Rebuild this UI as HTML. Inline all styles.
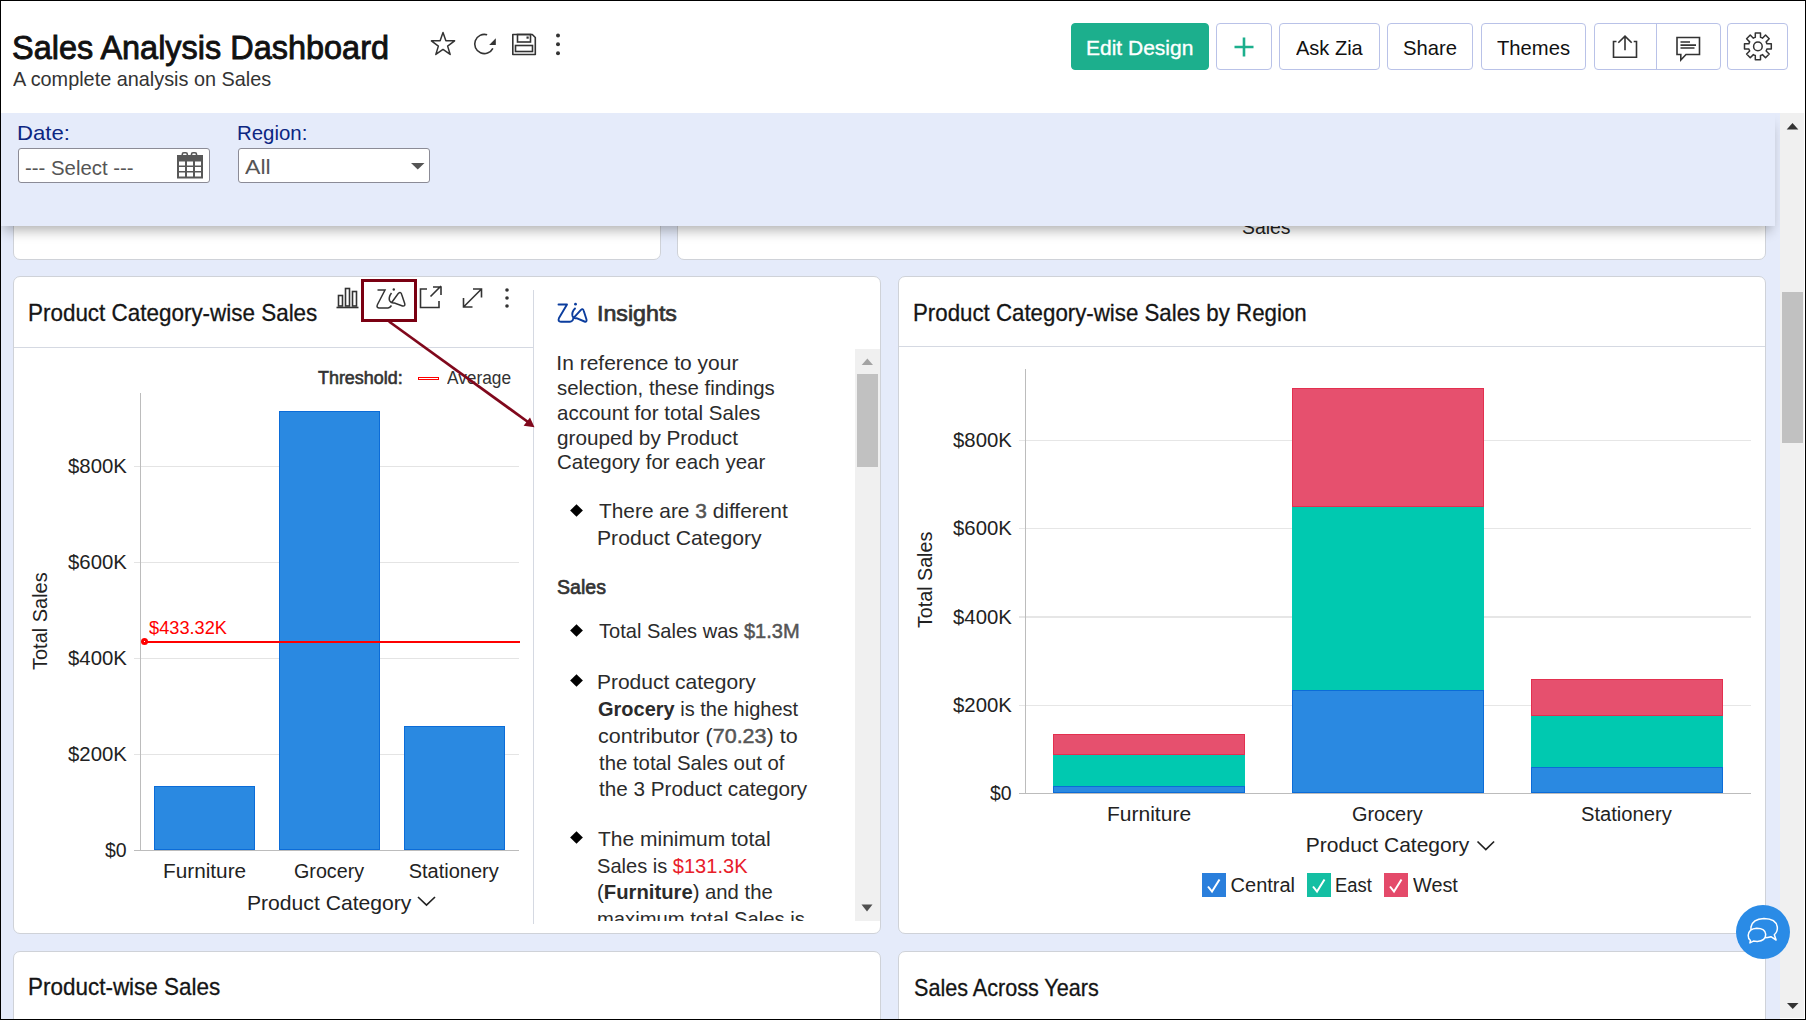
<!DOCTYPE html>
<html><head><meta charset="utf-8"><title>Sales Analysis Dashboard</title>
<style>
*{box-sizing:border-box;margin:0;padding:0}
html,body{width:1806px;height:1020px;overflow:hidden;background:#fff}
body{position:relative;font-family:"Liberation Sans",sans-serif;color:#222}
.a{position:absolute}
.t{position:absolute;white-space:pre;line-height:1;transform-origin:0 0}
b{font-weight:bold}
.card{position:absolute;background:#fff;border:1px solid #cfd2d8;border-radius:7px}
</style></head>
<body>
<div class="a" style="left:0px;top:113px;width:1780px;height:907px;background:#e5ebfa;"></div>
<div class="card" style="left:13px;top:150px;width:648px;height:110px"></div>
<div class="card" style="left:677px;top:150px;width:1089px;height:110px"></div>
<div class="t" style="left:1241.53px;top:217.00px;font-size:20px;font-weight:normal;color:#222;transform:scaleX(0.9688);">Sales</div>
<div class="card" style="left:13px;top:276px;width:868px;height:658px"></div>
<div class="a" style="left:14px;top:347px;width:519px;height:1px;background:#d5d9e2;"></div>
<div class="a" style="left:533px;top:290px;width:1px;height:634px;background:#d5d9e2;"></div>
<div class="t" style="left:28.43px;top:301.20px;font-size:24px;font-weight:normal;color:#151515;transform:scaleX(0.9349);-webkit-text-stroke:0.3px #151515;">Product Category-wise Sales</div>
<svg class="a" style="left:330px;top:276px" width="200" height="50" viewBox="330 276 200 50" fill="none" stroke="#333" stroke-width="1.6">
<path d="M336.5 307.5h22" />
<rect x="338.5" y="295.5" width="4" height="10.5" />
<rect x="345.5" y="288.5" width="4" height="17.5" />
<rect x="352.5" y="291.5" width="4" height="14.5" />
<path d="M377.5 290h7.5l-7.5 14.5q-1.5 3 1.5 3.5h9q2-.2 3.5-2.5" stroke-width="1.5"/>
<path d="M391.5 293q-3 4-2 7.5 1.5 3 5 2.5l8 3q3 .5 2.2-2.5l-3-9q-.8-3.2-3.5-1l-6.5 9" stroke-width="1.5"/>
<circle cx="393.8" cy="289.5" r="1.2" fill="#333" stroke="none"/>
<path d="M427 289h-6.5v18.5h18.5v-6.5" />
<path d="M430.5 296.5l10.5-10.5M433 287h8v8" />
<path d="M463.5 307l18-18M473 289h8.5v8.5M463.5 298v9h9" />
<circle cx="507" cy="290" r="1.8" fill="#333" stroke="none"/>
<circle cx="507" cy="298" r="1.8" fill="#333" stroke="none"/>
<circle cx="507" cy="306" r="1.8" fill="#333" stroke="none"/>
</svg>
<div class="a" style="left:134px;top:466px;width:385px;height:1px;background:#e4e4e4;"></div>
<div class="a" style="left:134px;top:562px;width:385px;height:1px;background:#e4e4e4;"></div>
<div class="a" style="left:134px;top:658px;width:385px;height:1px;background:#e4e4e4;"></div>
<div class="a" style="left:134px;top:754px;width:385px;height:1px;background:#e4e4e4;"></div>
<div class="a" style="left:134px;top:850px;width:385px;height:1px;background:#bcbcbc;"></div>
<div class="a" style="left:140px;top:393px;width:1px;height:458px;background:#bcbcbc;"></div>
<div class="t" style="left:67.90px;top:456.30px;font-size:20px;font-weight:normal;color:#222;transform:scaleX(1.0175);">$800K</div>
<div class="t" style="left:67.90px;top:552.30px;font-size:20px;font-weight:normal;color:#222;transform:scaleX(1.0175);">$600K</div>
<div class="t" style="left:67.90px;top:648.30px;font-size:20px;font-weight:normal;color:#222;transform:scaleX(1.0175);">$400K</div>
<div class="t" style="left:67.90px;top:744.30px;font-size:20px;font-weight:normal;color:#222;transform:scaleX(1.0175);">$200K</div>
<div class="t" style="left:104.50px;top:840.30px;font-size:20px;font-weight:normal;color:#222;transform:scaleX(0.9727);">$0</div>
<div class="a" style="left:154px;top:786px;width:101px;height:64px;background:#2a89e1;box-shadow:inset 0 0 0 1px #0b6cd8"></div>
<div class="a" style="left:279px;top:411px;width:101px;height:439px;background:#2a89e1;box-shadow:inset 0 0 0 1px #0b6cd8"></div>
<div class="a" style="left:404px;top:726px;width:101px;height:124px;background:#2a89e1;box-shadow:inset 0 0 0 1px #0b6cd8"></div>
<div class="a" style="left:144px;top:641px;width:376px;height:2px;background:#ff0000;"></div>
<div class="a" style="left:140.8px;top:638.3px;width:7px;height:7px;border-radius:50%;background:#ff0000"></div>
<div class="a" style="left:143.6px;top:641.1px;width:1.4px;height:1.4px;background:#fff"></div>
<div class="t" style="left:148.60px;top:618.90px;font-size:18px;font-weight:normal;color:#ff0000;transform:scaleX(1.0117);">$433.32K</div>
<div class="t" style="left:318.40px;top:369.00px;font-size:18px;font-weight:normal;color:#333;transform:scaleX(0.9952);-webkit-text-stroke:0.6px #333;">Threshold:</div>
<div class="a" style="left:418px;top:376.5px;width:21px;height:3.5px;border:1px solid #ff0000"></div>
<div class="t" style="left:446.60px;top:369.00px;font-size:18px;font-weight:normal;color:#333;transform:scaleX(0.9606);">Average</div>
<div class="t" style="left:162.92px;top:860.50px;font-size:20px;font-weight:normal;color:#222;transform:scaleX(1.0390);">Furniture</div>
<div class="t" style="left:294.41px;top:860.50px;font-size:20px;font-weight:normal;color:#222;transform:scaleX(0.9857);">Grocery</div>
<div class="t" style="left:408.70px;top:860.50px;font-size:20px;font-weight:normal;color:#222;">Stationery</div>
<div class="t" style="left:246.79px;top:891.70px;font-size:21px;font-weight:normal;color:#222;transform:scaleX(1.0056);">Product Category</div>
<svg class="a" style="left:416px;top:893px" width="22" height="16"><path d="M2 4l8.5 8 8.5-8" fill="none" stroke="#222" stroke-width="1.7"/></svg>
<div class="t" style="left:29.00px;top:670.00px;font-size:21px;font-weight:normal;color:#222;transform:rotate(-90deg) scaleX(0.9510);">Total Sales</div>
<svg class="a" style="left:554px;top:299px" width="36" height="28" viewBox="554 299 36 28" fill="none" stroke="#0b3d9e" stroke-width="1.9" stroke-linejoin="round" stroke-linecap="round">
<path d="M558.5 304.5h8.5l-8 13.5q-1.5 3.5 2 3.8h9q1.8 0 3-2"/>
<path d="M575 308.5q-3.5 3.5-2.5 7.5 1 3 4 2.2l8 3.3q2.5.8 2-2l-2.8-8.8q-.8-2.8-3-.5l-7.5 8.2"/>
<circle cx="575.5" cy="304.2" r="1.4" fill="#0b3d9e" stroke="none"/>
</svg>
<div class="t" style="left:596.89px;top:303.00px;font-size:22px;font-weight:normal;color:#333;transform:scaleX(1.0548);-webkit-text-stroke:0.7px #333;">Insights</div>
<div class="t" style="left:556.30px;top:351.90px;font-size:21px;font-weight:normal;color:#2b2b2b;">In reference to your</div>
<div class="t" style="left:557.33px;top:376.60px;font-size:21px;font-weight:normal;color:#2b2b2b;transform:scaleX(0.9717);">selection, these findings</div>
<div class="t" style="left:557.32px;top:401.70px;font-size:21px;font-weight:normal;color:#2b2b2b;transform:scaleX(0.9777);">account for total Sales</div>
<div class="t" style="left:557.31px;top:426.70px;font-size:21px;font-weight:normal;color:#2b2b2b;transform:scaleX(0.9874);">grouped by Product</div>
<div class="t" style="left:557.32px;top:451.30px;font-size:21px;font-weight:normal;color:#2b2b2b;transform:scaleX(0.9750);">Category for each year</div>
<div class="a" style="left:572.0px;top:505.5px;width:9px;height:9px;background:#000;transform:rotate(45deg)"></div>
<div class="t" style="left:598.70px;top:500.00px;font-size:21px;font-weight:normal;color:#2b2b2b;transform:scaleX(0.9937);">There are <span style="color:#555;-webkit-text-stroke:0.5px #555">3</span> different</div>
<div class="t" style="left:596.69px;top:526.50px;font-size:21px;font-weight:normal;color:#2b2b2b;transform:scaleX(1.0068);">Product Category</div>
<div class="t" style="left:556.57px;top:575.70px;font-size:21px;font-weight:normal;color:#333;transform:scaleX(0.9314);-webkit-text-stroke:0.7px #333;">Sales</div>
<div class="a" style="left:572.0px;top:626.0px;width:9px;height:9px;background:#000;transform:rotate(45deg)"></div>
<div class="t" style="left:598.70px;top:620.30px;font-size:21px;font-weight:normal;color:#2b2b2b;transform:scaleX(0.9550);">Total Sales was <span style="color:#555;-webkit-text-stroke:0.5px #555">$1.3M</span></div>
<div class="a" style="left:572.0px;top:676.0px;width:9px;height:9px;background:#000;transform:rotate(45deg)"></div>
<div class="t" style="left:596.90px;top:670.60px;font-size:21px;font-weight:normal;color:#2b2b2b;">Product category</div>
<div class="t" style="left:597.95px;top:697.50px;font-size:21px;font-weight:normal;color:#2b2b2b;transform:scaleX(0.9522);"><b>Grocery</b> is the highest</div>
<div class="t" style="left:597.88px;top:724.50px;font-size:21px;font-weight:normal;color:#2b2b2b;transform:scaleX(1.0238);">contributor (<span style="color:#555;-webkit-text-stroke:0.5px #555">70.23</span>) to</div>
<div class="t" style="left:598.90px;top:751.60px;font-size:21px;font-weight:normal;color:#2b2b2b;transform:scaleX(0.9688);">the total Sales out of</div>
<div class="t" style="left:598.90px;top:778.00px;font-size:21px;font-weight:normal;color:#2b2b2b;transform:scaleX(0.9853);">the 3 Product category</div>
<div class="a" style="left:572.0px;top:833.0px;width:9px;height:9px;background:#000;transform:rotate(45deg)"></div>
<div class="t" style="left:598.00px;top:828.00px;font-size:21px;font-weight:normal;color:#2b2b2b;">The minimum total</div>
<div class="t" style="left:597.04px;top:854.60px;font-size:21px;font-weight:normal;color:#2b2b2b;transform:scaleX(0.9551);">Sales is <span style="color:#e8202a">$131.3K</span></div>
<div class="t" style="left:597.03px;top:881.00px;font-size:21px;font-weight:normal;color:#2b2b2b;transform:scaleX(0.9650);">(<b>Furniture</b>) and the</div>
<div class="a" style="left:0;top:0;width:1806px;height:920.5px;overflow:hidden">
<div class="t" style="left:597.04px;top:908.00px;font-size:21px;font-weight:normal;color:#2b2b2b;transform:scaleX(0.9626);">maximum total Sales is</div>
</div>
<div class="a" style="left:855px;top:349px;width:25px;height:572px;background:#f0f0f0;"></div>
<div class="a" style="left:857px;top:373.5px;width:21px;height:93.5px;background:#c1c1c1;"></div>
<svg class="a" style="left:855px;top:349px" width="25" height="572"><path d="M6.7 16L12.35 9.5L18 16z" fill="#a3a3a3"/><path d="M6.5 555.5h11l-5.5 7z" fill="#505050"/></svg>
<div class="a" style="left:361px;top:279px;width:56px;height:43px;border:3px solid #7a0012"></div>
<svg class="a" style="left:380px;top:315px" width="165" height="120" viewBox="380 315 165 120">
<path d="M389 321.5L528 422" stroke="#80081c" stroke-width="2.7" fill="none"/>
<path d="M534.5 427.2L523.6 425.8L530 417.6z" fill="#80081c"/>
</svg>
<div class="card" style="left:898px;top:276px;width:868px;height:658px"></div>
<div class="a" style="left:899px;top:346px;width:866px;height:1px;background:#d5d9e2;"></div>
<div class="t" style="left:913.14px;top:301.20px;font-size:24px;font-weight:normal;color:#151515;transform:scaleX(0.9280);-webkit-text-stroke:0.3px #151515;">Product Category-wise Sales by Region</div>
<div class="a" style="left:1019px;top:439.5px;width:732px;height:1.5px;background:#e6e6e6;"></div>
<div class="a" style="left:1019px;top:527.5px;width:732px;height:1.5px;background:#e6e6e6;"></div>
<div class="a" style="left:1019px;top:616px;width:732px;height:1.5px;background:#e6e6e6;"></div>
<div class="a" style="left:1019px;top:704.5px;width:732px;height:1.5px;background:#e6e6e6;"></div>
<div class="a" style="left:1019px;top:793px;width:732px;height:1px;background:#bcbcbc;"></div>
<div class="a" style="left:1025px;top:369px;width:1px;height:425px;background:#bcbcbc;"></div>
<div class="t" style="left:953.00px;top:430.30px;font-size:20px;font-weight:normal;color:#222;transform:scaleX(1.0175);">$800K</div>
<div class="t" style="left:953.00px;top:518.30px;font-size:20px;font-weight:normal;color:#222;transform:scaleX(1.0175);">$600K</div>
<div class="t" style="left:953.00px;top:606.80px;font-size:20px;font-weight:normal;color:#222;transform:scaleX(1.0175);">$400K</div>
<div class="t" style="left:953.00px;top:695.30px;font-size:20px;font-weight:normal;color:#222;transform:scaleX(1.0175);">$200K</div>
<div class="t" style="left:989.60px;top:783.30px;font-size:20px;font-weight:normal;color:#222;transform:scaleX(0.9727);">$0</div>
<div class="a" style="left:1053px;top:734px;width:192px;height:21px;background:#e6506e;box-shadow:inset 0 0 0 1px #e3304f"></div>
<div class="a" style="left:1053px;top:755px;width:192px;height:31px;background:#00c9b0;"></div>
<div class="a" style="left:1053px;top:786px;width:192px;height:7px;background:#2a89e1;box-shadow:inset 0 0 0 1px #0b6cd8"></div>
<div class="a" style="left:1292px;top:388px;width:192px;height:119px;background:#e6506e;box-shadow:inset 0 0 0 1px #e3304f"></div>
<div class="a" style="left:1292px;top:507px;width:192px;height:183px;background:#00c9b0;"></div>
<div class="a" style="left:1292px;top:690px;width:192px;height:103px;background:#2a89e1;box-shadow:inset 0 0 0 1px #0b6cd8"></div>
<div class="a" style="left:1531px;top:679px;width:192px;height:37px;background:#e6506e;box-shadow:inset 0 0 0 1px #e3304f"></div>
<div class="a" style="left:1531px;top:716px;width:192px;height:51px;background:#00c9b0;"></div>
<div class="a" style="left:1531px;top:767px;width:192px;height:26px;background:#2a89e1;box-shadow:inset 0 0 0 1px #0b6cd8"></div>
<div class="t" style="left:1106.50px;top:804.20px;font-size:20px;font-weight:normal;color:#222;transform:scaleX(1.0506);">Furniture</div>
<div class="t" style="left:1352.41px;top:804.20px;font-size:20px;font-weight:normal;color:#222;transform:scaleX(0.9943);">Grocery</div>
<div class="t" style="left:1580.99px;top:804.20px;font-size:20px;font-weight:normal;color:#222;transform:scaleX(1.0079);">Stationery</div>
<div class="t" style="left:1305.80px;top:834.00px;font-size:21px;font-weight:normal;color:#222;">Product Category</div>
<svg class="a" style="left:1475px;top:836px" width="22" height="16"><path d="M2.5 5.5l8.3 8 8.3-8" fill="none" stroke="#222" stroke-width="1.7"/></svg>
<div class="t" style="left:914.30px;top:628.40px;font-size:21px;font-weight:normal;color:#222;transform:rotate(-90deg) scaleX(0.9373);">Total Sales</div>
<div class="a" style="left:1202px;top:873px;width:24px;height:24px;background:#2a7fdc"></div><svg class="a" style="left:1202px;top:873px" width="24" height="24"><path d="M6 13.5l4 5 7.5-12" fill="none" stroke="#fff" stroke-width="2"/></svg>
<div class="t" style="left:1230.60px;top:874.60px;font-size:20px;font-weight:normal;color:#222;">Central</div>
<div class="a" style="left:1307px;top:873px;width:24px;height:24px;background:#14bfa3"></div><svg class="a" style="left:1307px;top:873px" width="24" height="24"><path d="M6 13.5l4 5 7.5-12" fill="none" stroke="#fff" stroke-width="2"/></svg>
<div class="t" style="left:1334.86px;top:874.60px;font-size:20px;font-weight:normal;color:#222;transform:scaleX(0.9184);">East</div>
<div class="a" style="left:1384px;top:873px;width:24px;height:24px;background:#e44a6a"></div><svg class="a" style="left:1384px;top:873px" width="24" height="24"><path d="M6 13.5l4 5 7.5-12" fill="none" stroke="#fff" stroke-width="2"/></svg>
<div class="t" style="left:1413.20px;top:874.60px;font-size:20px;font-weight:normal;color:#222;transform:scaleX(0.9933);">West</div>
<div class="card" style="left:13px;top:951px;width:868px;height:200px"></div>
<div class="card" style="left:898px;top:951px;width:868px;height:200px"></div>
<div class="t" style="left:28.13px;top:975.40px;font-size:24px;font-weight:normal;color:#151515;transform:scaleX(0.9360);-webkit-text-stroke:0.3px #151515;">Product-wise Sales</div>
<div class="t" style="left:913.70px;top:975.50px;font-size:24px;font-weight:normal;color:#151515;transform:scaleX(0.8990);-webkit-text-stroke:0.3px #151515;">Sales Across Years</div>
<div class="a" style="left:0px;top:113px;width:1775px;height:113px;background:#e5ebfa;box-shadow:0 8px 12px -4px rgba(0,0,0,0.32)"></div>
<div class="t" style="left:17.19px;top:121.90px;font-size:21px;font-weight:normal;color:#0c2682;transform:scaleX(1.0543);">Date:</div>
<div class="t" style="left:236.76px;top:121.70px;font-size:21px;font-weight:normal;color:#0c2682;transform:scaleX(0.9725);">Region:</div>
<div class="a" style="left:18px;top:148px;width:192px;height:35px;background:#fff;border:1px solid #8b8b96;border-radius:3px"></div>
<div class="a" style="left:238px;top:148px;width:192px;height:35px;background:#fff;border:1px solid #8b8b96;border-radius:3px"></div>
<div class="t" style="left:25.03px;top:156.60px;font-size:21px;font-weight:normal;color:#555;transform:scaleX(0.9691);">--- Select ---</div>
<div class="t" style="left:245.00px;top:155.80px;font-size:21px;font-weight:normal;color:#555;transform:scaleX(1.1000);">All</div>
<svg class="a" style="left:176px;top:151px" width="28" height="29" viewBox="176 151 28 29">
<rect x="177" y="155" width="26" height="23.5" fill="#585858"/>
<rect x="182.3" y="152.8" width="5" height="4.5" rx="1.5" fill="none" stroke="#585858" stroke-width="1.6"/>
<rect x="191.5" y="152.8" width="5" height="4.5" rx="1.5" fill="none" stroke="#585858" stroke-width="1.6"/>
<g fill="#fff">
<rect x="179" y="161.5" width="6" height="4"/><rect x="187" y="161.5" width="6" height="4"/><rect x="195" y="161.5" width="6" height="4"/>
<rect x="179" y="167" width="6" height="4"/><rect x="187" y="167" width="6" height="4"/><rect x="195" y="167" width="6" height="4"/>
<rect x="179" y="172.5" width="6" height="4"/><rect x="187" y="172.5" width="6" height="4"/><rect x="195" y="172.5" width="6" height="4"/>
</g></svg>
<svg class="a" style="left:408px;top:160px" width="20" height="12"><path d="M3 3h13.5l-6.75 6.5z" fill="#555"/></svg>
<div class="a" style="left:0px;top:0px;width:1806px;height:113px;background:#fff;"></div>
<div class="t" style="left:12.39px;top:30.30px;font-size:34px;font-weight:normal;color:#111;transform:scaleX(0.9545);-webkit-text-stroke:0.9px #111;">Sales Analysis Dashboard</div>
<div class="t" style="left:13.30px;top:67.60px;font-size:21px;font-weight:normal;color:#333;transform:scaleX(0.9451);">A complete analysis on Sales</div>
<svg class="a" style="left:425px;top:28px" width="145" height="32" viewBox="425 28 145 32" fill="none" stroke="#333" stroke-width="1.6">
<path d="M443.00 32.40 L445.87 40.65 L454.60 40.83 L447.64 46.11 L450.17 54.47 L443.00 49.48 L435.83 54.47 L438.36 46.11 L431.40 40.83 L440.13 40.65Z" stroke-linejoin="round" stroke-width="1.5"/>
<path d="M487.14 34.83A9.6 9.6 0 1 0 492.87 48.33" />
<path d="M495.8 38.2V44.9H489.2Z" fill="#333" stroke="none"/>
<path d="M512.8 34.5h19.5l3 3v17h-22.5z" stroke-linejoin="round"/>
<rect x="517.5" y="34.5" width="13" height="7.5"/>
<rect x="515.5" y="45.5" width="17" height="6"/>
<rect x="526.5" y="36.5" width="2.2" height="2.2" fill="#333" stroke="none"/>
<circle cx="558" cy="35.5" r="2" fill="#333" stroke="none"/>
<circle cx="558" cy="44.3" r="2" fill="#333" stroke="none"/>
<circle cx="558" cy="53.2" r="2" fill="#333" stroke="none"/>
</svg>
<div class="a" style="left:1071px;top:23px;width:138px;height:47px;border:1px solid #b9c2e8;border-radius:4px;background:#fff;background:#1caf8d;border-color:#1caf8d"></div>
<div class="t" style="left:1086.00px;top:36.90px;font-size:21px;font-weight:normal;color:#fff;-webkit-text-stroke:0.35px #fff;">Edit Design</div>
<div class="a" style="left:1216px;top:23px;width:56px;height:47px;border:1px solid #b9c2e8;border-radius:4px;background:#fff;"></div>
<svg class="a" style="left:1232px;top:35px" width="24" height="24"><path d="M12 2.5v19M2.5 12h19" stroke="#1caf8d" stroke-width="2.6"/></svg>
<div class="a" style="left:1279px;top:23px;width:101px;height:47px;border:1px solid #b9c2e8;border-radius:4px;background:#fff;"></div>
<div class="t" style="left:1296.00px;top:36.80px;font-size:21px;font-weight:normal;color:#111;transform:scaleX(0.9529);">Ask Zia</div>
<div class="a" style="left:1387px;top:23px;width:86px;height:47px;border:1px solid #b9c2e8;border-radius:4px;background:#fff;"></div>
<div class="t" style="left:1403.04px;top:36.80px;font-size:21px;font-weight:normal;color:#111;transform:scaleX(0.9630);">Share</div>
<div class="a" style="left:1481px;top:23px;width:105px;height:47px;border:1px solid #b9c2e8;border-radius:4px;background:#fff;"></div>
<div class="t" style="left:1497.00px;top:36.80px;font-size:21px;font-weight:normal;color:#111;transform:scaleX(0.9627);">Themes</div>
<div class="a" style="left:1594px;top:23px;width:127px;height:47px;border:1px solid #b9c2e8;border-radius:4px;background:#fff;"></div>
<div class="a" style="left:1656px;top:24px;width:1px;height:45px;background:#b9c2e8;"></div>
<svg class="a" style="left:1600px;top:28px" width="190" height="38" viewBox="1600 28 190 38" fill="none" stroke="#333" stroke-width="1.6">
<path d="M1616.5 41.5h-3v15.8h23v-15.8h-2.8"/>
<path d="M1625 50.3V36.5M1618.3 42.8l6.7-6.7 6.7 6.7"/>
<path d="M1677 37.5h22.5v17h-13.5l-5.2 5.5v-5.5h-3.8z" stroke-linejoin="miter"/>
<path d="M1680.5 42h9.5M1680.5 45.1h15.5M1680.5 48h14"/>
</svg>
<div class="a" style="left:1727px;top:23px;width:61px;height:47px;border:1px solid #b9c2e8;border-radius:4px;background:#fff;"></div>
<svg class="a" style="left:1740px;top:29px" width="36" height="36" viewBox="1740 29 36 36" fill="none" stroke="#333" stroke-width="1.5" stroke-linejoin="round"><path d="M1755.30 37.37 L1755.30 33.00 L1760.50 33.00 L1760.50 37.37 A9.40 9.40 0 0 1 1762.45 38.17 L1762.45 38.17 L1765.54 35.09 L1769.21 38.76 L1766.13 41.85 A9.40 9.40 0 0 1 1766.93 43.80 L1766.93 43.80 L1771.30 43.80 L1771.30 49.00 L1766.93 49.00 A9.40 9.40 0 0 1 1766.13 50.95 L1766.13 50.95 L1769.21 54.04 L1765.54 57.71 L1762.45 54.63 A9.40 9.40 0 0 1 1760.50 55.43 L1760.50 55.43 L1760.50 59.80 L1755.30 59.80 L1755.30 55.43 A9.40 9.40 0 0 1 1753.35 54.63 L1753.35 54.63 L1750.26 57.71 L1746.59 54.04 L1749.67 50.95 A9.40 9.40 0 0 1 1748.87 49.00 L1748.87 49.00 L1744.50 49.00 L1744.50 43.80 L1748.87 43.80 A9.40 9.40 0 0 1 1749.67 41.85 L1749.67 41.85 L1746.59 38.76 L1750.26 35.09 L1753.35 38.17 A9.40 9.40 0 0 1 1755.30 37.37 Z"/><circle cx="1757.9" cy="46.4" r="4.3"/></svg>
<div class="a" style="left:1780px;top:113px;width:24px;height:905px;background:#f0f0f0;"></div>
<div class="a" style="left:1782px;top:292px;width:21px;height:151px;background:#c1c1c1;"></div>
<svg class="a" style="left:1780px;top:113px" width="24" height="905"><path d="M6.7 16.5l5.8-6.5 5.8 6.5z" fill="#333"/><path d="M7 890h11.5l-5.75 6z" fill="#333"/></svg>
<div class="a" style="left:1736px;top:904.5px;width:54px;height:54px;border-radius:50%;background:#2a8be6"></div>
<svg class="a" style="left:1736px;top:904px" width="54" height="54" viewBox="1736 904 54 54" stroke="#fff" stroke-width="1.5" stroke-linejoin="round">
<path d="M1752 932.5q-1.5-3-1-5.5q1.5-8 13-8.5q12 .2 13.3 8.3q.6 4.5-3 8l1.8 5.2-5.2-3.3q-3 1-6.5 1" fill="none"/>
<path d="M1750.5 940.5q-2.5-2-2.3-5.2q.5-6.5 8.5-7q8.5 0 9 6q.2 6.5-8.5 7.2q-2 0-3.8-.4l-3.5 1.8z" fill="#2a8be6"/>
</svg>
<div class="a" style="left:0;top:0;width:1806px;height:1020px;border:1px solid #000"></div>
</body></html>
